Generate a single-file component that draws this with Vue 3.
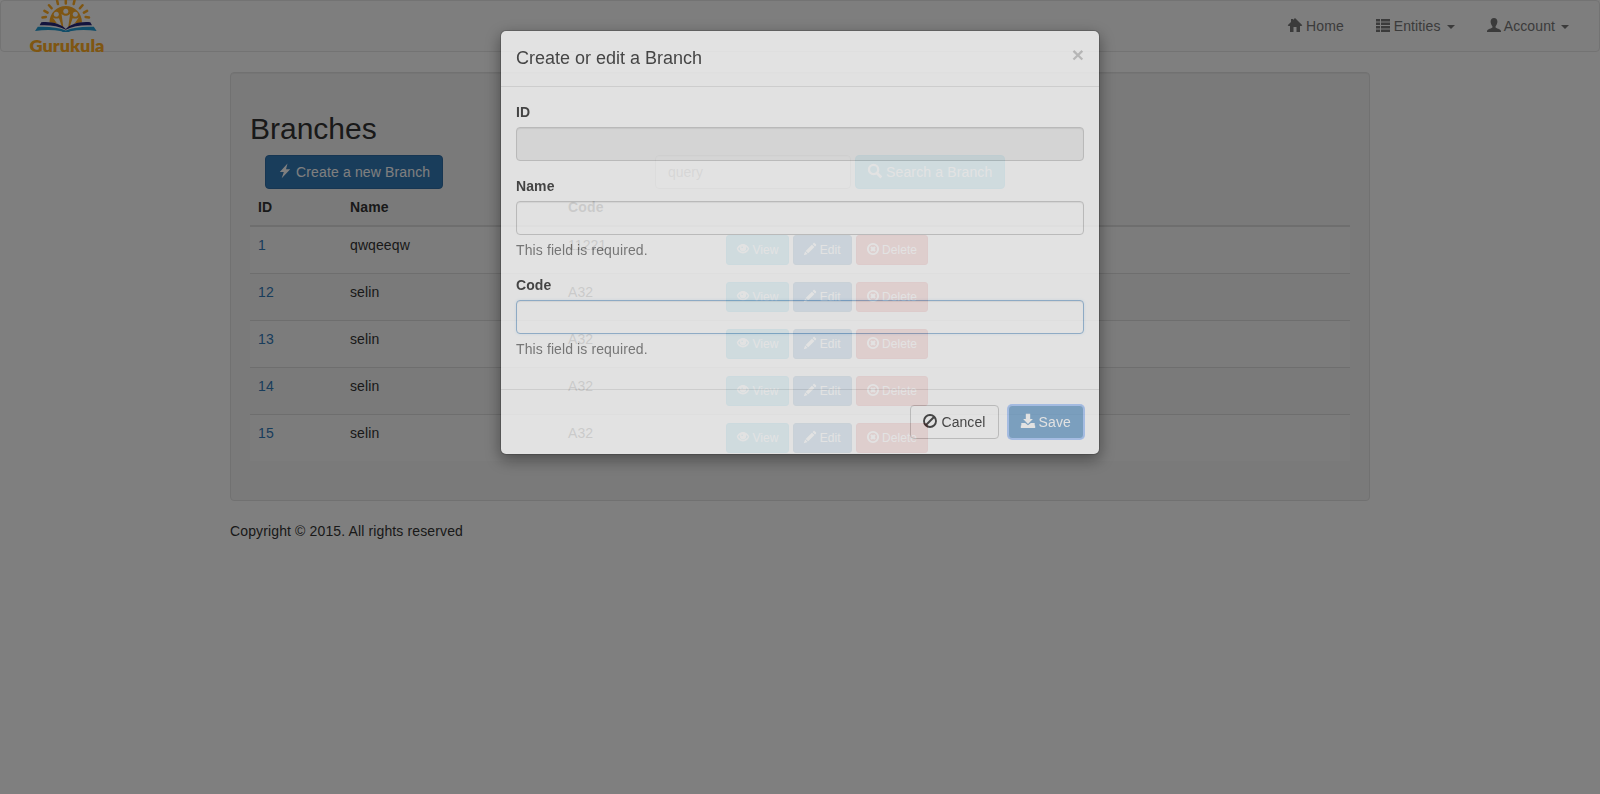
<script setup>
const rows = [
  { id: '1', name: 'qwqeeqw', code: '11221' },
  { id: '12', name: 'selin', code: 'A32' },
  { id: '13', name: 'selin', code: 'A32' },
  { id: '14', name: 'selin', code: 'A32' },
  { id: '15', name: 'selin', code: 'A32' }
]
</script>

<template>
  <div class="page">
    <nav class="navbar">
      <a class="brand">
        <svg class="logo" viewBox="0 0 80 56" width="80" height="56">
          <path d="M20.500 22.500C20.500 13 28 6 36.800 6S53 13 53 22.500l-7 .7-9.200 6.300-9.300-6.300z" fill="#ffac24" />
          <path d="M28 0l.9 4M36.800-1v4.600M45.600 0l-.9 4M20 5.200l2.600 3M53.500 5.200l-2.600 3M15.400 10.800l3.200 1.800M58.100 10.800l-3.200 1.800M13.500 17.500l3.400-.5M60 17.500l-3.400-.5" fill="none" stroke="#ffac24" stroke-width="2.500" stroke-linecap="round" />
          <g fill="#fcfcfc">
            <circle cx="27.300" cy="14.300" r="2.500" /><circle cx="36.800" cy="11.200" r="2.500" /><circle cx="46.300" cy="14.300" r="2.500" />
          </g>
          <path d="M32.500 13.800c1.300 1.500 2.700 2 4.300 2s3-.5 4.300-2L39 29h-4.400zM23.500 17c1.300 1.500 3.500 2 6.500 1.300l3.300 9.700-6-5.500zM50.100 17c-1.300 1.500-3.500 2-6.500 1.300L40.300 28l6-5.500z" fill="#fcfcfc" />
          <path d="M12.300 22.300c11-1 20 2 24.500 6.700 4.500-4.700 13.500-7.700 24.500-6.700l1.700 3c-10-.5-19 .5-26.200 4.500-7.200-4-16.200-5-26.200-4.500z" fill="#28287a" />
          <path d="M8.800 26.800c11-.5 21 .7 28 3.600 7-2.900 17-4.100 28-3.600l2.800 4.300c-9-1.500-18-1.400-26.500.1-1 1.200-7.600 1.200-8.600 0-8.500-1.500-17-1.600-26.500-.1z" fill="#229bd2" />
          <text x=".5" y="52.300" textLength="75" lengthAdjust="spacingAndGlyphs" class="logo-text">Gurukula</text>
        </svg>
      </a>
      <ul class="nav">
        <li><svg class="gi" viewBox="0 0 14 14"><path d="M7 0l7.300 7.300-.8.800H12V14H8.500V9h-3v5H2V8.100H.5l-.8-.8L3 4V1h2v1z" /></svg> Home</li>
        <li><svg class="gi" viewBox="0 0 14 14"><path d="M0 1h4v2.600H0zM5 1H14v2.600H5zM0 4.500h4v2.600H0zM5 4.500H14v2.600H5zM0 8h4v2.500H0zM5 8H14v2.500H5zM0 11.400h4V14H0zM5 11.400H14V14H5z" /></svg> Entities <b class="caret"></b></li>
        <li><svg class="gi" viewBox="0 0 14 14"><path d="M7 0c2.200 0 3.400 1.500 3.400 3.600 0 1.800-.7 3.500-1.800 4.600v1.200c0 .7 5.400 1.600 5.400 3.600v1H0V13c0-2 5.400-2.900 5.400-3.600V8.200C4.300 7.100 3.600 5.400 3.600 3.600 3.600 1.500 4.800 0 7 0z" /></svg> Account <b class="caret"></b></li>
      </ul>
    </nav>

    <main class="container">
      <section class="well">
        <h2>Branches</h2>
        <div class="toolbar">
          <button class="btn primary"><svg class="gi" viewBox="0 0 14 14"><path d="M9.500-.5L1.800 7.900h4L3.700 14.300l8.500-9H8z" /></svg> Create a new Branch</button>
          <div class="search">
            <input class="control query" placeholder="query" />
            <button class="btn info"><svg class="gi" viewBox="0 0 14 14"><path d="M9.600 7.800l4.700 4.700-1.900 1.900-4.700-4.600z" /><circle cx="5.600" cy="5.500" r="4.600" fill="none" stroke="currentColor" stroke-width="2.300" /></svg> Search a Branch</button>
          </div>
        </div>
        <table>
          <colgroup><col class="c-id" /><col class="c-name" /><col class="c-code" /><col /></colgroup>
          <thead><tr><th>ID</th><th>Name</th><th>Code</th><th></th></tr></thead>
          <tbody>
            <tr v-for="r in rows" :key="r.id">
              <td><a>{{ r.id }}</a></td>
              <td>{{ r.name }}</td>
              <td>{{ r.code }}</td>
              <td>
                <div class="actions">
                  <button class="btn sm info"><svg class="gi" viewBox="0 0 14 14"><path fill-rule="evenodd" d="M7 1.300c3.700 0 6.300 2.900 7.300 5.500-1 2.600-3.600 5.500-7.300 5.500S.7 9.400-.3 6.800C.7 4.200 3.300 1.300 7 1.300zM3.700 4.300C2.700 5 1.900 5.900 1.400 6.800c1 1.900 3.100 3.500 5.600 3.500s4.600-1.600 5.600-3.500c-.5-.9-1.300-1.800-2.300-2.500.3.500.4 1.100.4 1.600a3.700 3.700 0 0 1-7.400 0c0-.5.100-1.100.4-1.600zM5.700 3.900L4.900 5.300l1.400.8.800-1.400z" /></svg> View</button>
                  <button class="btn sm primary"><svg class="gi" viewBox="0 0 14 14"><path d="M11 .2c.5-.5 1-.5 1.500 0l1.400 1.400c.5.500.5 1 0 1.500l-1 1L10 1.200zM9.300 1.900l2.900 2.900-7.300 7.300L2 9.200zM1.300 9.900l2.900 2.900L-.2 14.200z" /></svg> Edit</button>
                  <button class="btn sm danger"><svg class="gi" viewBox="0 0 14 14"><circle cx="7" cy="7" r="6" fill="none" stroke="currentColor" stroke-width="2.200" /><path d="M4.700 4.700l4.600 4.600M9.300 4.700L4.700 9.300" stroke="currentColor" stroke-width="2.600" /></svg> Delete</button>
                </div>
              </td>
            </tr>
          </tbody>
        </table>
      </section>
      <footer class="copyright">Copyright © 2015. All rights reserved</footer>
    </main>

    <div class="backdrop"></div>
    <div class="modal">
      <form class="dialog" @submit.prevent>
        <header class="m-head">
          <h4>Create or edit a Branch</h4>
          <button type="button" class="close">×</button>
        </header>
        <div class="m-body">
          <div class="group">
            <label>ID</label>
            <input class="control" readonly />
          </div>
          <div class="group">
            <label>Name</label>
            <input class="control" />
            <p>This field is required.</p>
          </div>
          <div class="group">
            <label>Code</label>
            <input class="control focus" />
            <p>This field is required.</p>
          </div>
        </div>
        <footer class="m-foot">
          <button type="button" class="btn default"><svg class="gi" viewBox="0 0 14 14"><circle cx="7" cy="7" r="6" fill="none" stroke="currentColor" stroke-width="1.900" /><path d="M3 11L11 3" stroke="currentColor" stroke-width="1.900" /></svg> Cancel</button>
          <button type="button" class="btn primary save"><svg class="gi" viewBox="0 0 14 14"><path d="M4.800-.2h4.400V5h2.700L7 9.900 2.100 5h2.700zM.3 9h3.900L7 11.300 9.800 9h3.900v2.500h.5V14H-.2v-2.500h.5z" /></svg> Save</button>
        </footer>
      </form>
    </div>
  </div>
</template>

<style>
body {
  margin: 0;
  background: #fff;
  overflow: hidden;
}
</style>

<style scoped>
* {
  box-sizing: border-box;
}
.page {
  min-height: 794px;
  font: 14px/20px "Liberation Sans", Arial, sans-serif;
  color: #333;
}
button,
input {
  font: inherit;
}
.navbar {
  display: flex;
  justify-content: space-between;
  height: 52px;
  margin-bottom: 20px;
  padding: 0 15px 0 28px;
  background: #fcfcfc;
  border: 1px solid #e7e7e7;
  border-radius: 4px;
}
.logo {
  display: block;
  margin-top: -1px;
  overflow: visible;
}
.logo-text {
  font: 800 16.5px Lato, "Open Sans", sans-serif;
  fill: #ffac24;
}
.nav {
  display: flex;
  gap: 2px;
  margin: 0;
  padding: 0;
  list-style: none;
  letter-spacing: 0.1px;
  color: #777;
}
.nav li {
  padding: 15px;
}
.gi {
  display: inline-block;
  width: 1em;
  height: 1em;
  vertical-align: -1px;
  fill: currentColor;
  overflow: visible;
}
.caret {
  display: inline-block;
  margin-left: 2px;
  vertical-align: middle;
  border-top: 4px solid;
  border-right: 4px solid transparent;
  border-left: 4px solid transparent;
}
.container {
  width: 1140px;
  margin: 0 auto;
}
.well {
  padding: 19px;
  margin-bottom: 20px;
  background: #f5f5f5;
  border: 1px solid #e3e3e3;
  border-radius: 4px;
  box-shadow: inset 0 1px 1px rgba(0, 0, 0, 0.05);
}
h2 {
  margin: 20px 0 10px;
  font-size: 30px;
  font-weight: 500;
  line-height: 33px;
}
.toolbar {
  display: grid;
  grid-template-columns: 390px auto;
  justify-content: start;
  justify-items: start;
  padding-left: 15px;
}
.search {
  display: flex;
  gap: 4px;
}
.btn {
  height: 34px;
  padding: 6px 12px;
  line-height: 20px;
  letter-spacing: 0.14px;
  white-space: nowrap;
  color: #fff;
  border: 1px solid transparent;
  border-radius: 4px;
}
.btn.sm {
  height: 30px;
  padding: 5px 10px;
  font-size: 12px;
  line-height: 18px;
  letter-spacing: 0.05px;
  border-radius: 3px;
}
.primary {
  background: #337ab7;
  border-color: #2e6da4;
}
.info {
  background: #5bc0de;
  border-color: #46b8da;
}
.danger {
  background: #d9534f;
  border-color: #d43f3a;
}
.default {
  color: #333;
  background: transparent;
  border-color: #ccc;
  letter-spacing: 0.08px;
}
.control {
  display: block;
  width: 100%;
  height: 34px;
  padding: 6px 12px;
  color: #555;
  background: #fff;
  border: 1px solid #ccc;
  border-radius: 4px;
  outline: none;
  box-shadow: inset 0 1px 1px rgba(0, 0, 0, 0.075);
}
.control::placeholder {
  color: #999;
}
.control[readonly] {
  background: #eee;
}
.control.query {
  width: 196px;
}
.control.focus {
  border-color: #94b8da;
  box-shadow: inset 0 1px 1px rgba(0, 0, 0, 0.075), 0 0 3px rgba(102, 175, 233, 0.2);
}
table {
  width: 100%;
  margin-bottom: 20px;
  border-collapse: separate;
  border-spacing: 0;
  table-layout: fixed;
}
.c-id {
  width: 92px;
}
.c-name {
  width: 218px;
}
.c-code {
  width: 158px;
}
th {
  padding: 8px;
  text-align: left;
  letter-spacing: 0.15px;
  border-bottom: 2px solid #ddd;
}
td {
  padding: 8px;
  vertical-align: top;
  letter-spacing: 0.1px;
}
tr + tr td {
  border-top: 1px solid #ddd;
}
tbody tr:nth-child(odd) {
  background: #f9f9f9;
}
td a {
  color: #337ab7;
}
.actions {
  display: flex;
  gap: 4px;
}
.copyright {
  letter-spacing: 0.13px;
}
.backdrop {
  position: fixed;
  inset: 0;
  background: #000;
  opacity: 0.5;
}
.modal {
  position: fixed;
  inset: 0;
  opacity: 0.77;
}
.dialog {
  width: 600px;
  margin: 30px auto;
  background: #fff;
  background-clip: padding-box;
  border: 1px solid rgba(0, 0, 0, 0.2);
  border-radius: 6px;
  box-shadow: 0 5px 15px rgba(0, 0, 0, 0.5);
}
.m-head {
  display: flex;
  justify-content: space-between;
  align-items: flex-start;
  height: 56px;
  padding: 15px;
  border-bottom: 1px solid #e5e5e5;
}
h4 {
  margin: 0;
  font-size: 18px;
  font-weight: 500;
  line-height: 25px;
}
.close {
  margin-top: -2px;
  padding: 0;
  font-size: 21px;
  font-weight: 700;
  line-height: 21px;
  color: #000;
  background: none;
  border: 0;
  opacity: 0.22;
}
.m-body {
  padding: 15px;
}
.group {
  margin-bottom: 15px;
}
label {
  display: block;
  margin-bottom: 5px;
  font-weight: 700;
  letter-spacing: 0.1px;
}
.group p {
  margin: 5px 0 0;
  letter-spacing: 0.11px;
  color: #737373;
}
.m-foot {
  display: flex;
  justify-content: flex-end;
  gap: 9px;
  padding: 15px;
  border-top: 1px solid #e5e5e5;
}
.save {
  border-color: #86b4ff;
  opacity: 0.65;
  box-shadow: 0 0 0 1px #86b4ff;
}
</style>
